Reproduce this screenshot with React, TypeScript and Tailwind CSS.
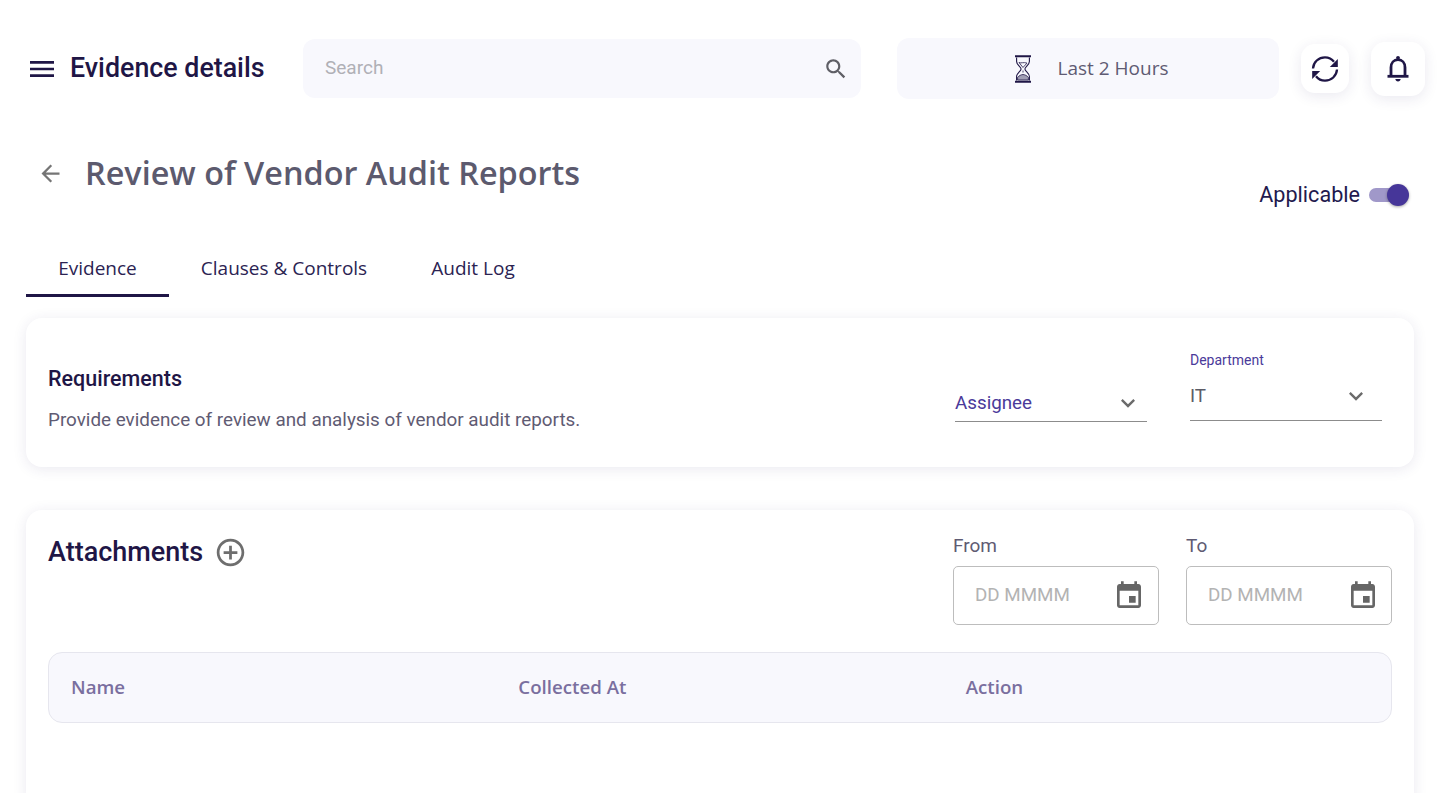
const roboto = "font-[family-name:Roboto,sans-serif]";
const open = "font-[family-name:Open_Sans,sans-serif]";

function I({ d, className }: { d: string; className: string }) {
  return (
    <svg viewBox="0 0 24 24" fill="currentColor" className={className}>
      <path d={d} />
    </svg>
  );
}

const P = {
  menu: "M3 18h18v-2H3v2zm0-5h18v-2H3v2zm0-7v2h18V6H3z",
  search:
    "M15.5 14h-.79l-.28-.27C15.41 12.59 16 11.11 16 9.5 16 5.91 13.09 3 9.5 3S3 5.91 3 9.5 5.91 16 9.5 16c1.61 0 3.09-.59 4.23-1.57l.27.28v.79l5 4.99L20.49 19l-4.99-5zm-6 0C7.01 14 5 11.99 5 9.5S7.01 5 9.5 5 14 7.01 14 9.5 11.99 14 9.5 14z",
  back: "M20 11H7.83l5.59-5.59L12 4l-8 8 8 8 1.41-1.41L7.83 13H20v-2z",
  event:
    "M17 12h-5v5h5v-5zM16 1v2H8V1H6v2H5c-1.11 0-1.99.9-1.99 2L3 19c0 1.1.89 2 2 2h14c1.1 0 2-.9 2-2V5c0-1.1-.9-2-2-2h-1V1h-2zm3 18H5V8h14v11z",
  chevron: "M16.59 8.59 12 13.17 7.41 8.59 6 10l6 6 6-6z",
  add: "M13 7h-2v4H7v2h4v4h2v-4h4v-2h-4V7zm-1-5C6.48 2 2 6.48 2 12s4.48 10 10 10 10-4.48 10-10S17.52 2 12 2zm0 18c-4.41 0-8-3.59-8-8s3.59-8 8-8 8 3.59 8 8-3.59 8-8 8z",
};

function Hourglass() {
  return (
    <svg viewBox="0 0 18 28" fill="none" stroke="#1f1646" strokeWidth="1.1" className="h-[28px] w-[18px]">
      <path d="M1 1.2h16M1 26.800h16" strokeWidth="2" />
      <path d="M2.600 2.500v4c0 3.400 4.500 5.300 4.500 7.500s-4.500 4.100-4.500 7.500v4M15.400 2.500v4c0 3.400-4.500 5.300-4.500 7.500s4.500 4.100 4.500 7.500v4" />
      <path d="M5 7.500c2 1 4.500-.6 8 .6L9 12.500zM9 15.500v2" strokeWidth="0.8" />
      <path d="M3.600 25v-2.500c1.500-2 3.600-2.800 5.400-3 1.800.2 3.900 1 5.400 3V25z" fill="#1f1646" fillOpacity="0.4" strokeWidth="0.8" />
    </svg>
  );
}

function Refresh() {
  return (
    <svg viewBox="0 0 30 30" fill="none" className="-ml-[1px] h-[30px] w-[30px]" stroke="#1f1646" strokeWidth="2.3">
      <path d="M3 14.500C3.400 8 8.600 3.400 15 3.400c3.700 0 6.800 1.600 9 4.400" />
      <path d="M27 15.500c-.4 6.500-5.600 11.100-12 11.100-3.700 0-6.800-1.600-9-4.400" />
      <path d="M27.800 5v8h-8z" fill="#1f1646" stroke="none" />
      <path d="M2.200 25v-8h8z" fill="#1f1646" stroke="none" />
    </svg>
  );
}

function Bell() {
  return (
    <svg viewBox="0 0 24 28" fill="none" className="h-[28px] w-[24px]" stroke="#1f1646" strokeWidth="2.8">
      <path d="M5 21V12.500C5 7.800 7.900 4.700 12 4.700s7 3.100 7 7.800V21" />
      <path d="M1.500 21.300h21" />
      <circle cx="12" cy="2.800" r="1.900" fill="#1f1646" stroke="none" />
      <path d="M9.300 24h5.400c-.2 1.500-1.200 2.400-2.700 2.400S9.500 25.500 9.300 24z" fill="#1f1646" stroke="none" />
    </svg>
  );
}

function Select({ label, value }: { label?: string; value: string }) {
  return (
    <div className="w-[192px]">
      {label ? <div className="mb-[5px] text-[14px] leading-[16px] text-[#4a3a9a]">{label}</div> : null}
      <div className={label ? "flex h-[48px] items-center justify-between border-b border-[#8c8c8c] pb-[2px]" : "flex h-[36px] items-center justify-between border-b border-[#8c8c8c] pb-[2px]"}>
        <span className={label ? "mt-[2px] text-[18.800px] text-[#5c5c66]" : "mt-[2px] text-[18.800px] text-[#4a3a9a]"}>{value}</span>
        <I d={P.chevron} className={label ? "mr-[12px] h-[28px] w-[28px] text-[#6b6b6b]" : "mr-[5px] h-[28px] w-[28px] text-[#6b6b6b]"} />
      </div>
    </div>
  );
}

function DateField({ label }: { label: string }) {
  return (
    <div className="w-[206px]">
      <div className="mb-[10px] text-[19px] leading-[21px] text-[#5f5b73]">{label}</div>
      <div className={label === "To" ? "flex h-[59px] items-center justify-between rounded-[5px] border border-[#bdbdbd] pl-[21px] pr-[12px]" : "flex h-[59px] items-center justify-between rounded-[5px] border border-[#bdbdbd] pl-[21px] pr-[13px]"}>
        <span className="text-[18.800px] text-[#b3b3b3]">DD MMMM</span>
        <I d={P.event} className="h-[32px] w-[32px] text-[#666666]" />
      </div>
    </div>
  );
}

export default function App() {
  return (
    <div className={`h-[793px] overflow-hidden bg-white ${roboto}`}>
      <header className="flex items-center pl-[26px] pr-[19px] pt-[38px]">
        <I d={P.menu} className="h-[32px] w-[32px] text-[#1f1646]" />
        <h1 className="ml-[12px] w-[233px] text-[26.800px] leading-[59px] font-medium whitespace-nowrap text-[#1f1646]">
          Evidence details
        </h1>
        <div className="flex h-[59px] w-[558px] items-center justify-between rounded-[12px] bg-[#f8f8fd] pl-[22px] pr-[12px]">
          <span className="-mt-[1px] text-[19px] text-[#b0b0b6]">Search</span>
          <I d={P.search} className="h-[26px] w-[26px] text-[#5f5f66]" />
        </div>
        <div className="ml-[36px] flex h-[61px] w-[382px] items-center justify-center gap-[26px] rounded-[12px] bg-[#f8f8fd] pl-[6px]">
          <Hourglass />
          <span className={`text-[19px] text-[#5f5b73] ${open}`}>Last 2 Hours</span>
        </div>
        <button className="ml-[22px] flex h-[49px] w-[48px] items-center justify-center rounded-[14px] bg-white shadow-[0_3px_14px_rgba(50,40,110,0.1)]">
          <Refresh />
        </button>
        <button className="ml-[22px] flex h-[54px] w-[54px] items-center justify-center rounded-[14px] bg-white shadow-[0_3px_14px_rgba(50,40,110,0.1)]">
          <Bell />
        </button>
      </header>

      <div className="relative flex h-[142px] items-start pl-[37px] pr-[41px]">
        <div className="mt-[50px] flex items-center">
          <I d={P.back} className="h-[27px] w-[27px] text-[#757575]" />
          <h2 className={`-mt-[2px] ml-[21px] text-[32.400px] leading-[50px] font-semibold whitespace-nowrap text-[#5c5a6e] ${open}`}>
            Review of Vendor Audit Reports
          </h2>
        </div>
        <div className="mt-[80px] ml-auto flex items-center">
          <span className="text-[21.600px] leading-[32px] text-[#231a4e]">Applicable</span>
          <div className="relative ml-[9px] h-[14px] w-[34px] rounded-full bg-[#a098c9]">
            <span className="absolute top-[-4px] right-[-6px] h-[22px] w-[22px] rounded-full bg-[#463699] shadow-[0_1px_3px_rgba(0,0,0,0.35)]" />
          </div>
        </div>
      </div>

      <nav className={`flex h-[56px] pl-[26px] text-[19px] text-[#2b2352] ${open}`}>
        <div className="flex w-[143px] items-center justify-center border-b-[3px] border-[#1f1646] pt-[2px]">Evidence</div>
        <div className="flex w-[230px] items-center justify-center pb-[1px]">Clauses &amp; Controls</div>
        <div className="flex w-[148px] items-center justify-center pb-[1px] whitespace-nowrap">Audit Log</div>
      </nav>

      <section className="mr-[30px] mt-[21px] ml-[26px] flex h-[149px] items-start justify-between rounded-[16px] bg-white px-[22px] shadow-[0_2px_14px_rgba(50,40,110,0.1)]">
        <div className="pt-[47px]">
          <div className="text-[21.500px] leading-[28px] font-medium text-[#1f1646]">Requirements</div>
          <p className="mt-[13px] text-[18.850px] leading-[28px] text-[#5f5b73]">
            Provide evidence of review and analysis of vendor audit reports.
          </p>
        </div>
        <div className="flex items-start gap-[43px] pr-[10px]">
          <div className="pt-[68px]">
            <Select value="Assignee" />
          </div>
          <div className="pt-[34px]">
            <Select label="Department" value="IT" />
          </div>
        </div>
      </section>

      <section className="mt-[43px] mr-[30px] ml-[26px] h-[300px] rounded-[16px] bg-white px-[22px] shadow-[0_2px_14px_rgba(50,40,110,0.1)]">
        <div className="flex items-start justify-between pt-[25px]">
          <div className="flex items-center">
            <span className="text-[27px] leading-[34px] font-medium text-[#1f1646]">Attachments</span>
            <I d={P.add} className="ml-[11px] h-[33px] w-[33px] text-[#6e6e6e]" />
          </div>
          <div className="flex gap-[27px]">
            <DateField label="From" />
            <DateField label="To" />
          </div>
        </div>
        <div className={`mt-[27px] grid h-[71px] grid-cols-3 items-center rounded-[14px] border border-[#e6e6ee] bg-[#f8f8fd] text-[18.700px] font-semibold text-[#7a6f9f] ${open}`}>
          <div className="pl-[22px]">Name</div>
          <div className="pl-[22px]">Collected At</div>
          <div className="pl-[22px]">Action</div>
        </div>
      </section>
    </div>
  );
}
